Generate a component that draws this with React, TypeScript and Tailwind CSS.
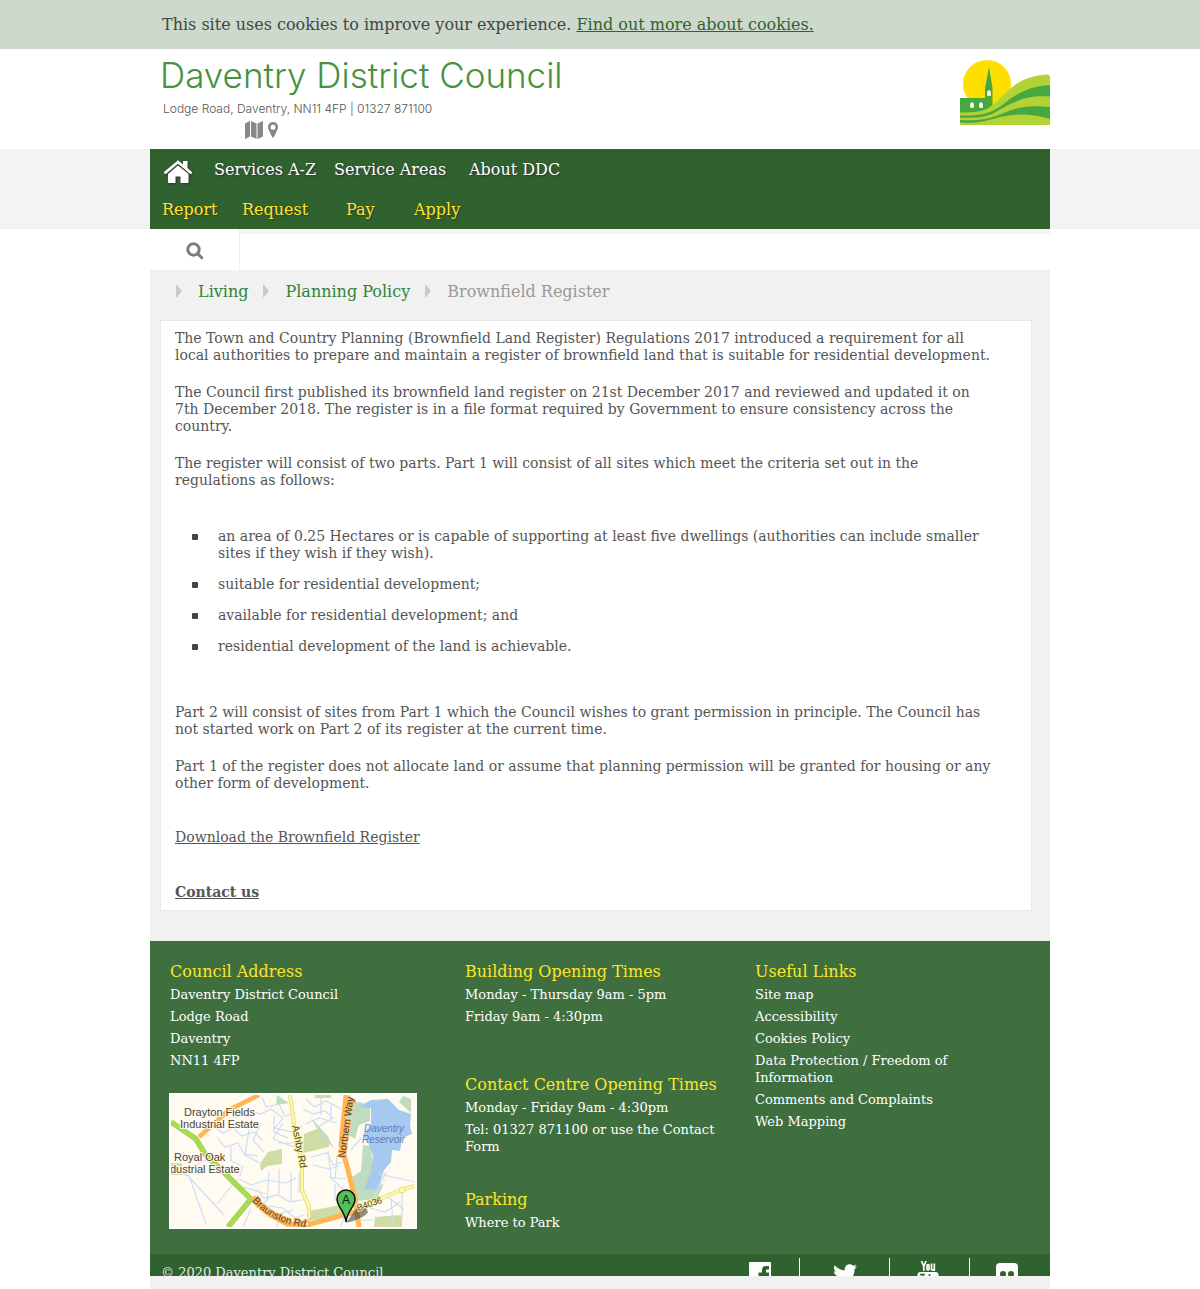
import React from "react";
import { FaTwitter } from "react-icons/fa";

const crumbs = ["Living", "Planning Policy"];

const criteria = [
  "an area of 0.25 Hectares or is capable of supporting at least five dwellings (authorities can include smaller sites if they wish if they wish).",
  "suitable for residential development;",
  "available for residential development; and",
  "residential development of the land is achievable.",
];

const usefulLinks = [
  "Site map",
  "Accessibility",
  "Cookies Policy",
  "Data Protection / Freedom of Information",
  "Comments and Complaints",
  "Web Mapping",
];

function CouncilLogo() {
  return (
    <svg viewBox="0 0 90 66" className="h-[66px] w-[90px]" role="img" aria-label="Daventry District Council logo">
      <circle cx="27" cy="25" r="24" fill="#fddf00" />
      <path d="M0 53C15 53 25 53 34 45C50 30 58 18 86 15.500Q90 15 90 19V66H0Z" fill="#b2d235" />
      <path d="M0 39H25V29L29 8L32.500 29V46C25 53 15 53.500 0 53.500Z" fill="#47a83f" />
      <path d="M27.500 36.500V32.500Q29 30.500 30.500 32.500V36.500ZM10.500 48.500V44.500Q12 42.500 13.500 44.500V48.500ZM19.500 48.500V44.500Q21 42.500 22.500 44.500V48.500Z" fill="#fff" stroke="#fff" strokeWidth=".6" />
      <path d="M0 56.500C20 57 29 55 41 47C57 34 70 27 90 26V37.500C65 36 54 43 39 51C27 59 17 59 0 58.500Z" fill="#47a83f" />
      <path d="M0 61C20 62 29 60 41 55C57 48 70 46 90 48V60C68 54 55 55 40 58C27 62 14 65 0 63.500Z" fill="#47a83f" />
    </svg>
  );
}

function HomeIcon() {
  return (
    <svg viewBox="0 0 28 24" className="h-6 w-7 drop-shadow-[1px_1px_1px_#333]" aria-hidden="true">
      <path d="M1.500 12.500L14 2L26.500 12.500" fill="none" stroke="#fff" strokeWidth="2.800" strokeLinecap="round" />
      <path d="M19 1H23.500V10L19 6Z" fill="#fff" />
      <path d="M14 5.500L24.500 14V22Q24.500 23 23.500 23H16.500V16.500H11.500V23H5Q4 23 4 22V14Z" fill="#fff" />
    </svg>
  );
}

function SearchIcon() {
  return (
    <svg viewBox="0 0 18 18" className="size-[18px]" fill="none" stroke="#83797b" strokeWidth="3" aria-hidden="true">
      <circle cx="7.500" cy="7.500" r="5.700" />
      <path d="M11.500 11.500L15.800 15.800" strokeLinecap="round" />
    </svg>
  );
}

function MapIcon() {
  return (
    <svg viewBox="0 0 18 18" className="size-[18px]" fill="currentColor" aria-hidden="true">
      <path d="M0 2.500L5 0V15.500L0 18ZM6 0L11.500 2.500V18L6 15.500ZM12.500 2.500L18 0V15.500L12.500 18Z" />
    </svg>
  );
}

function PinIcon() {
  return (
    <svg viewBox="0 0 10 16" className="h-4 w-2.5" fill="currentColor" aria-hidden="true">
      <path fillRule="evenodd" d="M5 0A5 5 0 0 1 9.700 7L6 15Q5 16.500 4 15L.3 7A5 5 0 0 1 5 0ZM5 2.700A2.500 2.500 0 1 0 5 7.700A2.500 2.500 0 1 0 5 2.700Z" />
    </svg>
  );
}

function CrumbArrow() {
  return (
    <svg viewBox="0 0 6 12" className="mb-[3px] h-3 w-1.5 shrink-0" aria-hidden="true">
      <path d="M0 0H1L6 6L1 12H0Z" fill="#c8c8c8" />
    </svg>
  );
}

function StreetMap() {
  const halo = { paintOrder: "stroke", stroke: "#fffbf0", strokeWidth: 2 } as const;
  return (
    <svg viewBox="0 0 244 132" className="block h-[132px] w-[244px]" role="img" aria-label="Map showing the council offices in Daventry">
      <rect width="244" height="132" fill="#fffbf0" />
      <g fill="#cfdca5">
        <path d="M133 39L146 34L158 43V52L132 58Z" />
        <path d="M97 57L111 54V69L96 71L90 76L89 69Z" />
        <path d="M138 116L180 108V119L137 126Z" />
        <path d="M0 68H11V80H0Z" />
        <path d="M204 122L231 120V132H203Z" />
        <path d="M144 0H160V3H144Z" />
      </g>
      <g fill="#bfdcc0">
        <path d="M176 8L190 7L199 13V26L188 30L184 44L176 39Z" />
        <path d="M192 50L200 51L202 74L194 94L213 89L218 77L206 104L184 106L181 82L190 76Z" />
        <path d="M106 0L118 8L106 10L94 35L105 12Z" />
        <path d="M139 22L156 40L163 54L151 41Z" />
        <path d="M232 1L240 4V18L228 7Z" />
      </g>
      <path d="M187 12L200 5L217 4L228 15L240 19L239 30L241 39L231 43L229 56L221 55L220 67L213 75L207 94L193 95L200 77L202 61L197 47L192 40L200 29L200 13Z" fill="#a6c9f0" />
      <g fill="none" stroke="#cddcf7" strokeWidth="1.200">
        <path d="M40 30l12 8 10-5 9 8 12-4 8 8M46 42l8 10 13-4 6 11 14 2M60 52v14l12 6-3 9M78 35l-4 25 15 8M90 28l-8 17 11 12M68 84l12 6 15-5 20 3 10-5M86 94l7 9 14-3 12 7 17-3M98 76l-2 30M108 74v25M120 78v28M128 78v20M72 92l23 7M100 101l-9 9 21 3 12 10 9-3" />
        <path d="M78 15l12 4 10-5 12 9-8 10 18 4 9-6M91 2l4 10 13-3 6 12 11-3M103 20v17l14 6M112 28l-10 16 21 8M107 48h21M135 4l8 8 12-6 15 8M132 14l10 5 12-3 9 8M135 29l13-6 18 5M160 10v14l-15 9M150 3v17M140 62l16-4 6 12 13-4M157 56l3 27 15 14M166 62l-2 22M142 70l16 4 10-3M158 82l17 2M164 89v17" />
        <path d="M18 82l35 38M0 76l18 5 17 48M12 57l7 16 23-12 15 23M66 84l-20 25M80 114l-8 18M106 132l3-13 13-4M208 79l36 8M215 77l-12 25M199 113l15 4 15-10M220 105l2 22M231 98v26M187 108v17h15M176 117l-7 15M174 112l8 6M215 100l18 15M180 55l10-12" />
      </g>
      <path d="M0 27L25 44L34 59L80 104L57 132" fill="none" stroke="#a1c86b" strokeWidth="5.500" />
      <path d="M0 27L25 44L34 59L80 104L57 132" fill="none" stroke="#a9dc4d" strokeWidth="4" />
      <path d="M88 0L58 15L28 42" fill="none" stroke="#ffb554" strokeWidth="4.500" />
      <path d="M82 102L98 119L116 129L136 130L180 118L196 112" fill="none" stroke="#ffb554" strokeWidth="5" />
      <path d="M175 0L170 50L176 71L184 104L188 132" fill="none" stroke="#ffb554" strokeWidth="5" />
      <path d="M119 0L124 37L131 69V95L138 112V123" fill="none" stroke="#dfd979" strokeWidth="4" />
      <path d="M119 0L124 37L131 69V95L138 112V123" fill="none" stroke="#fff7a5" strokeWidth="2.500" />
      <path d="M186 112L211 103L233 94L244 91" fill="none" stroke="#e6dc83" strokeWidth="4" />
      <path d="M186 112L211 103L233 94L244 91" fill="none" stroke="#fff7a5" strokeWidth="2.500" />
      <circle cx="231" cy="95" r="3" fill="#fff7a5" stroke="#e6dc83" />
      <circle cx="135" cy="129" r="3" fill="#fffbf0" stroke="#ffb554" strokeWidth="2" />
      <path d="M175 128L185 114Q194 110 197 117Q194 123 175 128Z" fill="#333" opacity=".55" />
      <g fontFamily="'Liberation Sans', sans-serif" fontSize="11" fill="#49433c">
        <text x="13" y="21" style={halo}>Drayton Fields</text>
        <text x="9" y="33" style={halo}>Industrial Estate</text>
        <text x="3" y="66" style={halo}>Royal Oak</text>
        <text x="-1" y="78" style={halo}>dustrial Estate</text>
        <text transform="translate(121 31) rotate(79)" fontSize="10" style={{ ...halo, stroke: "#fff59b" }}>Ashby Rd</text>
        <text transform="translate(174 63) rotate(-82)" fontSize="10" style={{ ...halo, stroke: "#ffb554" }}>Northern Way</text>
        <text transform="translate(187 116) rotate(-19)" fontSize="9" style={{ ...halo, stroke: "#fff59b" }}>B4036</text>
        <path id="braunston-road" d="M81 106Q102 129 134 132" fill="none" />
        <text fontSize="10" style={{ ...halo, stroke: "#ffb554" }}><textPath href="#braunston-road">Braunston Rd</textPath></text>
        <g fill="#5e7fb5" fontStyle="italic" fontSize="10">
          <text x="193" y="37">Daventry</text>
          <text x="191" y="48">Reservoir</text>
        </g>
      </g>
      <path d="M175 127C174 116 166 112 166 104A9 9 0 0 1 184 104C184 112 176 116 175 127Z" fill="#54bf5b" stroke="#111" strokeWidth="1.500" />
      <text x="175" y="109" textAnchor="middle" fontFamily="'Liberation Sans', sans-serif" fontSize="12" fill="#111">A</text>
    </svg>
  );
}

function FooterBlock({ title, className, children }: { title: string; className?: string; children: React.ReactNode }) {
  return (
    <section className={className}>
      <h2 className="text-base leading-5 text-[#fde52a]">{title}</h2>
      <div className="mt-1 flex flex-col gap-[5px]">{children}</div>
    </section>
  );
}

export default function App() {
  return (
    <div className="min-h-screen bg-white font-['DejaVu_Serif',serif] text-sm leading-[17px] text-[#555]">
      <div className="bg-[#ccd9cc]">
        <p className="mx-auto h-[49px] max-w-[900px] px-3 pt-[13px] text-base leading-6 text-[#444]">
          This site uses cookies to improve your experience.{" "}
          <a href="#cookies" className="text-[#306230] underline">Find out more about cookies.</a>
        </p>
      </div>

      <header className="mx-auto flex h-[100px] max-w-[900px] items-start justify-between pt-2.5">
        <div className="pl-2.5">
          <h1 className="font-['Inter',sans-serif] text-[35px] leading-8 font-light text-[#46923f]">Daventry District Council</h1>
          <p className="mt-2.5 pl-[3px] font-['Inter',sans-serif] text-xs leading-4 font-light text-[#555]">Lodge Road, Daventry, NN11 4FP | 01327 871100</p>
          <div className="mt-1 ml-[85px] flex items-center gap-[5px] text-[#888]">
            <a href="#map" aria-label="Map"><MapIcon /></a>
            <a href="#location" aria-label="Location"><PinIcon /></a>
          </div>
        </div>
        <CouncilLogo />
      </header>

      <div className="bg-[#f3f3f1]">
        <nav className="mx-auto max-w-[900px] bg-[#306230] text-base leading-[42px] text-white [text-shadow:1px_1px_2px_#333]">
          <div className="flex h-10 pl-3.5">
            <a href="#home" aria-label="Home" className="w-[50px] pt-[11px]"><HomeIcon /></a>
            <a href="#services" className="w-[120px]">Services A-Z</a>
            <a href="#areas" className="w-[135px]">Service Areas</a>
            <a href="#about">About DDC</a>
          </div>
          <div className="flex h-10 pl-3 text-[#fde52a]">
            <a href="#report" className="w-20">Report</a>
            <a href="#request" className="w-[104px]">Request</a>
            <a href="#pay" className="w-[68px]">Pay</a>
            <a href="#apply">Apply</a>
          </div>
        </nav>
      </div>

      <div className="mx-auto max-w-[900px] bg-[#f1f1f1]">
        <div className="flex h-[41px] bg-white">
          <button type="button" aria-label="Search" className="flex w-[90px] items-center justify-center border-r border-[#f1f1f1] pt-0.5"><SearchIcon /></button>
          <div className="flex-1 border-t-[5px] border-[#f3f3f3]" />
        </div>

        <nav aria-label="Breadcrumb" className="flex h-[50px] items-start pt-3 pl-[26px] text-base leading-5 text-[#999]">
          {crumbs.map((c) => (
            <span key={c} className="mr-[15px] flex items-center gap-4">
              <CrumbArrow />
              <a href="#crumb" className="text-[#338333]">{c}</a>
            </span>
          ))}
          <span className="flex items-center gap-4"><CrumbArrow />Brownfield Register</span>
        </nav>

        <main className="mr-[18px] ml-2.5 border border-[#e9e9e9] bg-white pt-[9px] pr-10 pb-[9px] pl-3.5">
          <div className="flex flex-col gap-5">
            <p>The Town and Country Planning (Brownfield Land Register) Regulations 2017 introduced a requirement for all local authorities to prepare and maintain a register of brownfield land that is suitable for residential development.</p>
            <p>The Council first published its brownfield land register on 21st December 2017 and reviewed and updated it on 7th December 2018. The register is in a file format required by Government to ensure consistency across the country.</p>
            <p>The register will consist of two parts. Part 1 will consist of all sites which meet the criteria set out in the regulations as follows:</p>
          </div>
          <ul className="mt-[39px] flex flex-col gap-3.5">
            {criteria.map((c) => (
              <li key={c} className="flex">
                <span className="mt-1.5 mr-5 ml-[17px] size-[6px] shrink-0 rounded-[1px] bg-[#444]" />
                {c}
              </li>
            ))}
          </ul>
          <p className="mt-[49px]">Part 2 will consist of sites from Part 1 which the Council wishes to grant permission in principle. The Council has not started work on Part 2 of its register at the current time.</p>
          <p className="mt-5">Part 1 of the register does not allocate land or assume that planning permission will be granted for housing or any other form of development.</p>
          <p className="mt-[37px]"><a href="#download" className="underline">Download the Brownfield Register</a></p>
          <p className="mt-[38px] font-bold"><a href="#contact" className="underline">Contact us</a></p>
        </main>

        <footer className="mt-[30px] pb-[13px] text-[13px] text-white">
          <div className="grid h-[312px] grid-cols-[295fr_290fr_295fr] bg-[#406f3f] pt-[21px] pl-5">
            <div>
              <FooterBlock title="Council Address">
                <p>Daventry District Council</p>
                <p>Lodge Road</p>
                <p>Daventry</p>
                <p>NN11 4FP</p>
              </FooterBlock>
              <a href="#map" className="-ml-px mt-6 inline-block border-2 border-white"><StreetMap /></a>
            </div>
            <div>
              <FooterBlock title="Building Opening Times">
                <p>Monday - Thursday 9am - 5pm</p>
                <p>Friday 9am - 4:30pm</p>
              </FooterBlock>
              <FooterBlock title="Contact Centre Opening Times" className="mt-[50px]">
                <p>Monday - Friday 9am - 4:30pm</p>
                <a href="#form" className="max-w-[260px]">Tel: 01327 871100 or use the Contact Form</a>
              </FooterBlock>
              <FooterBlock title="Parking" className="mt-[35px]">
                <a href="#park">Where to Park</a>
              </FooterBlock>
            </div>
            <FooterBlock title="Useful Links">
              {usefulLinks.map((l) => (
                <a key={l} href="#link" className="max-w-[220px]">{l}</a>
              ))}
            </FooterBlock>
          </div>
          <div className="flex h-[23px] items-start justify-between overflow-hidden border-t border-[#447444] bg-[#306230] pl-[11px]">
            <p className="pt-2.5 text-[#e5ece5]">© 2020 Daventry District Council</p>
            <div className="flex pt-1">
              <a href="#facebook" aria-label="Facebook" className="flex h-10 w-20 justify-center border-r border-white pt-1">
                <svg viewBox="0 0 24 24" className="size-6" fill="#fff"><path fillRule="evenodd" d="M2 0H22Q23 0 23 1V22Q23 23 22 23H18V14H21V10.500H18V8.500Q18 7.500 19 7.500H21V4H18Q14 4 14 8V10.500H10.500V14H14V23H1V1Q1 0 2 0Z" /></svg>
              </a>
              <a href="#twitter" aria-label="Twitter" className="flex h-10 w-[90px] justify-center border-r border-white pt-1"><FaTwitter className="size-6" /></a>
              <a href="#youtube" aria-label="YouTube" className="flex h-10 w-20 justify-center border-r border-white pt-[3px] pr-1">
                <svg viewBox="0 0 24 28" className="h-7 w-6" fill="none" stroke="#fff" strokeWidth="1.700">
                  <path d="M5.500 0L7.800 5.500V10M10 0L7.800 5.500" />
                  <rect x="11" y="3.500" width="2" height="5.500" rx="1" />
                  <path d="M15.500 2.500V8.500Q17 9.500 18.300 8V2.500V10" />
                  <rect x="1.500" y="11" width="21" height="16" rx="3" fill="#fff" stroke="none" />
                  <path d="M4 13.500H9M6.500 13.500V24M13.500 13V24" stroke="#306230" />
                </svg>
              </a>
              <a href="#flickr" aria-label="Flickr" className="flex h-10 w-20 justify-center pt-[5px] pr-1.5">
                <svg viewBox="0 0 22 22" className="size-[22px]"><rect width="22" height="22" rx="4" fill="#fff" /><circle cx="7" cy="11" r="3" fill="#306230" /><circle cx="15" cy="11" r="3" fill="#306230" /></svg>
              </a>
            </div>
          </div>
        </footer>
      </div>
    </div>
  );
}
